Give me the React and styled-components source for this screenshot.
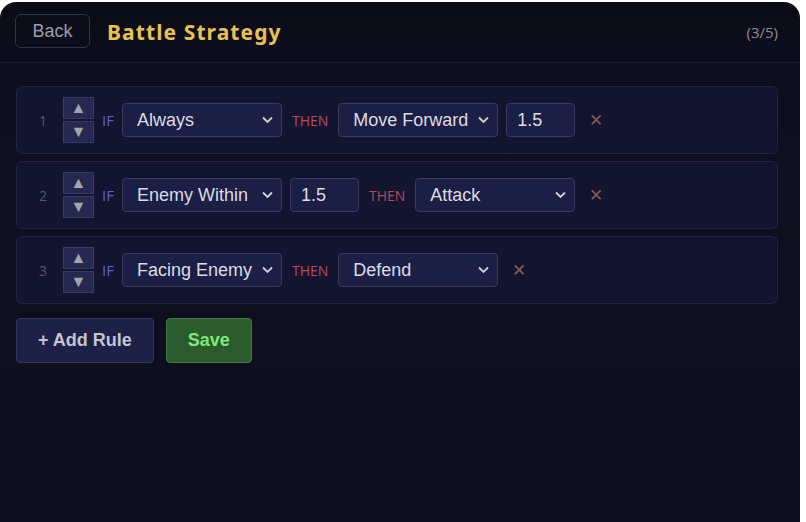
import React, { useState } from 'react';
import styled, { createGlobalStyle } from 'styled-components';

const Global = createGlobalStyle`
    html, body {
        margin: 0;
        background: #ffffff;
    }
    * { box-sizing: border-box; }
`

const Panel = styled.div`
    width: 800px;
    min-height: 520px;
    margin-top: 2px;
    border-radius: 16px 16px 0 0;
    background: linear-gradient(180deg, #0b0b18 0%, #0f0f20 30%, #0e0e1d 100%);
    overflow: hidden;
`

const Header = styled.div`
    height: 61px;
    display: flex;
    align-items: center;
    padding: 0 22px 0 15px;
    border-bottom: 1px solid #1b1b30;
`

const BackButton = styled.button`
    width: 75px;
    height: 34px;
    margin-top: -2px;
    background: transparent;
    border: 1px solid #34344a;
    border-radius: 6px;
    color: #9c9caa;
    font-family: "Liberation Sans", Arial, sans-serif;
    font-size: 18px;
    cursor: pointer;
`

const Title = styled.h1`
    margin: 0 0 0 17px;
    color: #e8c24a;
    font-family: "Noto Sans", sans-serif;
    font-weight: 700;
    font-size: 21px;
    letter-spacing: 1.1px;
`

const Counter = styled.span`
    margin-left: auto;
    color: #8a8a98;
    font-family: "Open Sans", sans-serif;
    font-size: 15px;
`

const Content = styled.div`
    padding: 23px 22px 20px 16px;
`

const RuleList = styled.div`
    display: flex;
    flex-direction: column;
    gap: 7px;
`

const Row = styled.div`
    height: 68px;
    display: flex;
    align-items: center;
    gap: 8px;
    padding: 0 16px 0 16px;
    background: #121430;
    border: 1px solid #202347;
    border-radius: 6px;
`

const Num = styled.span`
    width: 20px;
    text-align: center;
    color: #555869;
    font-family: "Open Sans", sans-serif;
    font-size: 14px;
`

const Arrows = styled.div`
    display: flex;
    flex-direction: column;
    gap: 2px;
    margin: 0 0 0 2px;
`

const ArrowBtn = styled.button`
    width: 31px;
    height: 22px;
    padding: 0;
    background: #252850;
    border: 1px solid #363a60;
    color: #a4a4ae;
    font-size: 16px;
    line-height: 1;
    display: flex;
    align-items: center;
    justify-content: center;
    cursor: pointer;
`

const Keyword = styled.span`
    color: ${p => p.$then ? '#b94a5c' : '#5c60d0'};
    font-family: "Open Sans", sans-serif;
    font-size: ${p => p.$then ? 14 : 15}px;
    margin: ${p => p.$then ? '0 2px' : '0'};
`

const SelectWrap = styled.div`
    position: relative;
    width: ${p => p.$w || 160}px;
    height: 34px;
`

const Select = styled.select`
    appearance: none;
    width: 100%;
    height: 100%;
    padding: 0 28px 0 14px;
    background: #1b1e45;
    border: 1px solid #383b5c;
    border-radius: 4px;
    color: #dcdce4;
    font-family: "Liberation Sans", Arial, sans-serif;
    font-size: 18px;
    outline: none;
`

const Chevron = styled.svg`
    position: absolute;
    right: 9px;
    top: 13px;
    pointer-events: none;
`

const NumInput = styled.input`
    width: ${p => p.$w || 69}px;
    height: 34px;
    padding: 0 10px;
    background: #1b1e45;
    border: 1px solid #383b5c;
    border-radius: 4px;
    color: #dcdce4;
    font-family: "Liberation Sans", Arial, sans-serif;
    font-size: 18px;
    outline: none;
`

const Remove = styled.button`
    margin-left: 6px;
    background: none;
    border: none;
    padding: 0;
    color: #8a5656;
    font-size: 17px;
    line-height: 1;
    cursor: pointer;
`

const Actions = styled.div`
    display: flex;
    gap: 12px;
    margin-top: 14px;
`

const ActionButton = styled.button`
    height: 45px;
    padding: 0 21px;
    background: ${p => p.$save ? '#2b5a2c' : '#1d2047'};
    border: 1px solid ${p => p.$save ? '#3f7b40' : '#32355a'};
    border-radius: 4px;
    color: ${p => p.$save ? '#7fe87c' : '#c4c4d2'};
    font-family: "Liberation Sans", Arial, sans-serif;
    font-weight: 700;
    font-size: 18px;
    cursor: pointer;
`

const CONDITIONS = ['Always', 'Enemy Within', 'Facing Enemy']
const ACTIONS = ['Move Forward', 'Attack', 'Defend']

const Dropdown = ({ value, options, width, onChange }) => (
    <SelectWrap $w={width}>
        <Select value={value} onChange={e => onChange(e.target.value)}>
            {options.map(o => <option key={o}>{o}</option>)}
        </Select>
        <Chevron width="11" height="8" viewBox="0 0 11 8">
            <path d="M1 1.5 L5.5 6 L10 1.5" fill="none" stroke="#d0d0da" strokeWidth="1.8" />
        </Chevron>
    </SelectWrap>
)

const App = () => {
    const [rules, setRules] = useState([
        { cond: 'Always', action: 'Move Forward', actionArg: '1.5' },
        { cond: 'Enemy Within', condArg: '1.5', action: 'Attack' },
        { cond: 'Facing Enemy', action: 'Defend' },
    ])

    const update = (i, key, val) => {
        setRules(rules.map((r, idx) => idx === i ? { ...r, [key]: val } : r))
    }

    return (
        <>
            <Global />
            <Panel>
                <Header>
                    <BackButton>Back</BackButton>
                    <Title>Battle Strategy</Title>
                    <Counter>(3/5)</Counter>
                </Header>
                <Content>
                    <RuleList>
                        {rules.map((r, i) => (
                            <Row key={i}>
                                <Num>{i + 1}</Num>
                                <Arrows>
                                    <ArrowBtn>▲</ArrowBtn>
                                    <ArrowBtn>▼</ArrowBtn>
                                </Arrows>
                                <Keyword>IF</Keyword>
                                <Dropdown value={r.cond} options={CONDITIONS} onChange={v => update(i, 'cond', v)} />
                                {r.condArg && <NumInput value={r.condArg} onChange={e => update(i, 'condArg', e.target.value)} />}
                                <Keyword $then>THEN</Keyword>
                                <Dropdown value={r.action} options={ACTIONS} onChange={v => update(i, 'action', v)} />
                                {r.actionArg && <NumInput value={r.actionArg} onChange={e => update(i, 'actionArg', e.target.value)} />}
                                <Remove onClick={() => setRules(rules.filter((_, idx) => idx !== i))}>✕</Remove>
                            </Row>
                        ))}
                    </RuleList>
                    <Actions>
                        <ActionButton>+ Add Rule</ActionButton>
                        <ActionButton $save>Save</ActionButton>
                    </Actions>
                </Content>
            </Panel>
        </>
    )
}

export default App
